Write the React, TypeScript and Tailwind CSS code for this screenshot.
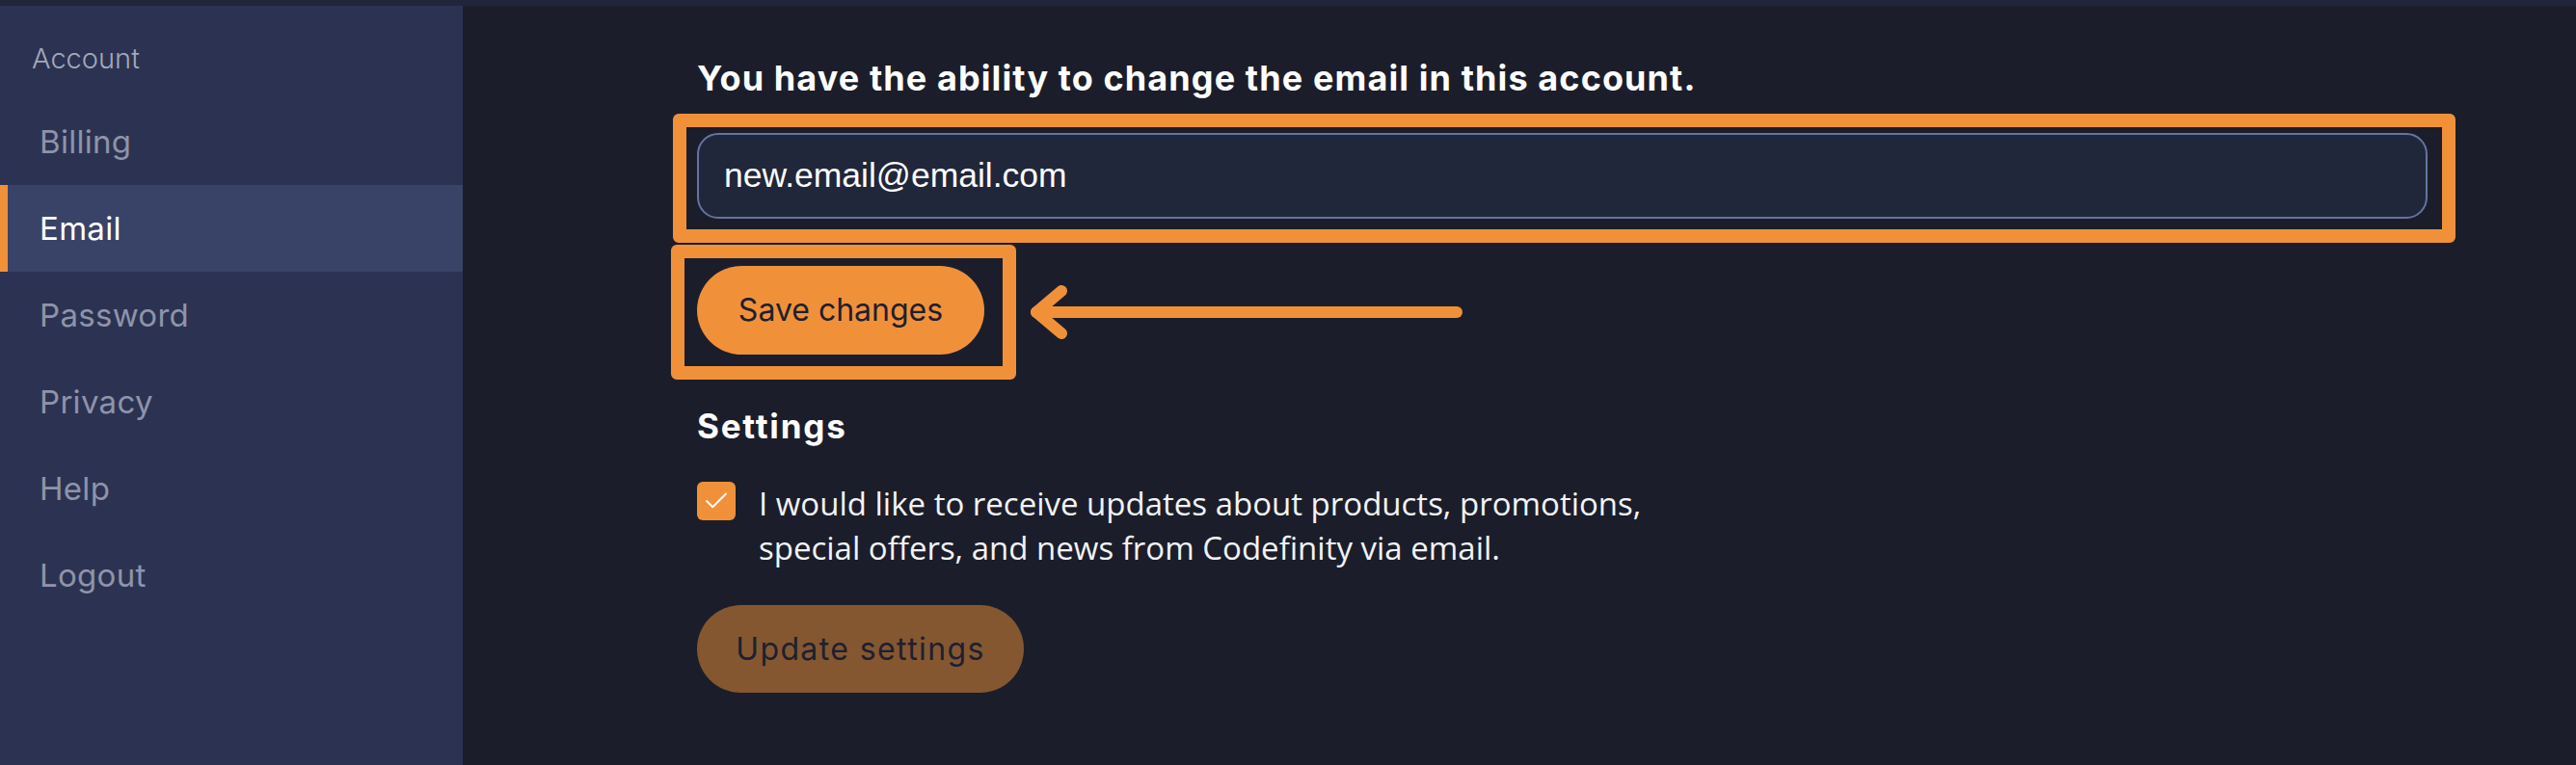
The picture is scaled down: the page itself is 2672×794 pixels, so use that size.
import { Check } from 'lucide-react';

const navItems = [
  { label: 'Billing', active: false },
  { label: 'Email', active: true },
  { label: 'Password', active: false },
  { label: 'Privacy', active: false },
  { label: 'Help', active: false },
  { label: 'Logout', active: false },
];

function Sidebar() {
  return (
    <aside className="w-[480px] shrink-0 bg-[#2c3352] font-['Inter',sans-serif]">
      <div className="mt-[40px] mb-[27px] pl-[33px] text-[29px] leading-none font-light text-[#a3a8ba]">Account</div>
      <nav>
        {navItems.map((item) => (
          <div
            key={item.label}
            className={
              item.active
                ? 'flex h-[90px] items-center border-l-[8px] border-[#f0913a] bg-[#394368] pl-[33px] text-[33px] leading-none tracking-[0.3px] text-white'
                : 'flex h-[90px] items-center pl-[41px] text-[33px] leading-none tracking-[0.3px] text-[#8e94aa]'
            }
          >
            {item.label}
          </div>
        ))}
      </nav>
    </aside>
  );
}

function Arrow() {
  return (
    <svg width="470" height="60" viewBox="0 0 470 60" className="ml-[11px]">
      <g stroke="#f0913a" strokeWidth="12" strokeLinecap="round" strokeLinejoin="round" fill="none">
        <path d="M446 30 H10" />
        <path d="M36 8 L10 30 L36 52" />
      </g>
    </svg>
  );
}

export default function App() {
  return (
    <div className="flex h-[794px] w-[2672px] flex-col overflow-hidden bg-[#1b1e2a]">
      <div className="h-[6px] shrink-0 bg-[#21253a]" />
      <div className="flex flex-1">
        <Sidebar />
        <main className="flex-1 pl-[243px] pt-[57px] font-['Inter',sans-serif]">
          <h1 className="text-[36px] leading-none font-bold tracking-[1.1px] text-white">
            You have the ability to change the email in this account.
          </h1>

          <div className="-ml-[25px] mt-[19px] w-[1849px] rounded-[6px] border-[14px] border-[#f0913a] pl-[11px] pr-[15px] pt-[6px] pb-[11px]">
            <div className="flex h-[89px] items-center rounded-[22px] border-2 border-[#65749f] bg-[#21273a] pl-[26px] font-['Liberation_Sans',Arial,sans-serif] text-[35.5px] text-white">
              new.email@email.com
            </div>
          </div>

          <div className="-ml-[27px] mt-[2px] flex items-center">
            <div className="rounded-[6px] border-[14px] border-[#f0913a] pl-[13px] pr-[19px] pt-[8px] pb-[12px]">
              <button className="flex h-[92px] w-[298px] items-center justify-center rounded-full bg-[#f0913a] text-[32px] text-[#1d2030]">
                Save changes
              </button>
            </div>
            <Arrow />
          </div>

          <h2 className="mt-[31px] text-[35px] leading-none font-bold tracking-[1.8px] text-white">Settings</h2>

          <div className="mt-[40px] flex gap-[24px]">
            <div className="flex h-[40px] w-[40px] shrink-0 items-center justify-center rounded-[6px] bg-[#f0913a]">
              <Check className="h-[30px] w-[30px] text-white" strokeWidth={1.6} />
            </div>
            <p className="font-['Open_Sans',sans-serif] text-[33px] leading-[46px] text-[#f2f3f6]">
              I would like to receive updates about products, promotions,
              <br />
              special offers, and news from Codefinity via email.
            </p>
          </div>

          <button className="mt-[36px] flex h-[91px] w-[339px] items-center justify-center rounded-full bg-[#845730] text-[32px] tracking-[1.4px] text-[#1d2030]">
            Update settings
          </button>
        </main>
      </div>
    </div>
  );
}
